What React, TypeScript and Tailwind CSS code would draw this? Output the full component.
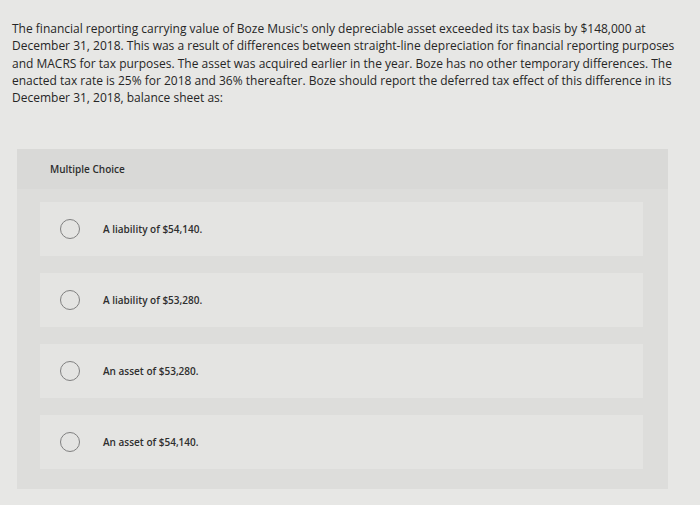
const questionLines = [
  "The financial reporting carrying value of Boze Music's only depreciable asset exceeded its tax basis by $148,000 at",
  "December 31, 2018. This was a result of differences between straight-line depreciation for financial reporting purposes",
  "and MACRS for tax purposes. The asset was acquired earlier in the year. Boze has no other temporary differences. The",
  "enacted tax rate is 25% for 2018 and 36% thereafter. Boze should report the deferred tax effect of this difference in its",
  "December 31, 2018, balance sheet as:",
];

const choices = [
  "A liability of $54,140.",
  "A liability of $53,280.",
  "An asset of $53,280.",
  "An asset of $54,140.",
];

function Choice({ label }: { label: string }) {
  return (
    <div className="flex h-[54px] items-center bg-[#e4e4e2]">
      <span className="ml-[20px] h-[20px] w-[20px] rounded-full border-[1.5px] border-[#808080]" />
      <span className="ml-[23px] text-[10px] font-semibold text-[#2e2e2e]">{label}</span>
    </div>
  );
}

export default function App() {
  return (
    <div
      className="h-[505px] w-[700px] overflow-hidden bg-[#e7e7e5] text-[#262626]"
      style={{ fontFamily: "'Open Sans', Lato, sans-serif" }}
    >
      <div className="pl-[12px] pt-[20px] text-[12px] leading-[17.3px]">
        {questionLines.map((line) => (
          <div key={line} className="whitespace-nowrap">
            {line}
          </div>
        ))}
      </div>
      <div className="ml-[17px] mt-[43px] w-[651px] bg-[#dddddb] pb-[20px]">
        <div className="flex h-[40px] items-center bg-[#d9d9d7] pl-[33px] text-[10px] font-semibold text-[#2e2e2e]">
          Multiple Choice
        </div>
        <div className="ml-[23px] mr-[25px] mt-[13px] flex flex-col gap-[17px]">
          {choices.map((c) => (
            <Choice key={c} label={c} />
          ))}
        </div>
      </div>
    </div>
  );
}
